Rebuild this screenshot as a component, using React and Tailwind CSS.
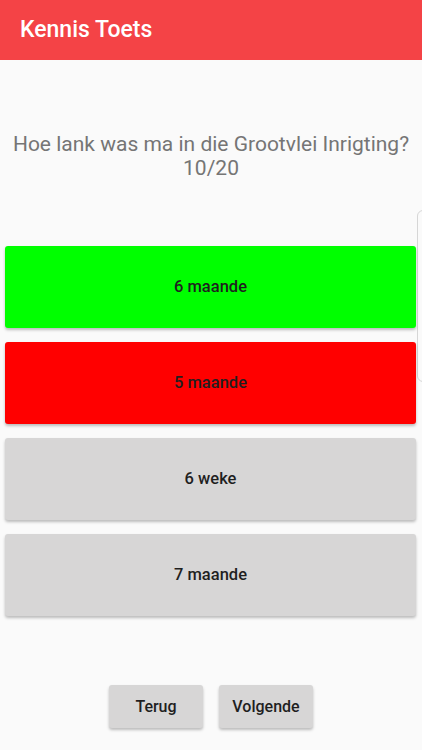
import { useState } from 'react'

const answers = [
  { label: '6 maande', color: 'bg-[#00ff00]' },
  { label: '5 maande', color: 'bg-[#ff0000]' },
  { label: '6 weke', color: 'bg-[#d7d6d6]' },
  { label: '7 maande', color: 'bg-[#d7d6d6]' },
]

function App() {
  const [picked, setPicked] = useState(null)

  return (
    <div
      className="relative h-[750px] w-[422px] overflow-hidden bg-[#fafafa] flex flex-col"
      style={{ fontFamily: 'Roboto, "Noto Sans", sans-serif' }}
    >
      <header className="h-[60px] bg-[#f44346] flex items-center px-5">
        <h1 className="text-[23px] font-medium text-white">Kennis Toets</h1>
      </header>

      {/* faint side card peeking on the right */}
      <div className="absolute left-[417px] top-[210px] h-[172px] w-[20px] rounded-md border border-[#d6d6d6] bg-[#fafafa]" />

      <div className="pt-[72px] text-center text-[21px] leading-[24px] text-[#757575]">
        <p>Hoe lank was ma in die Grootvlei Inrigting?</p>
        <p>10/20</p>
      </div>

      <div className="relative mt-[66px] flex flex-col gap-[14px] pl-[5px] pr-[6px]">
        {answers.map((a, i) => (
          <button
            key={a.label}
            onClick={() => setPicked(i)}
            className={`h-[82px] w-full rounded-[3px] ${a.color} text-[16.5px] font-medium text-[#1f1f1f] shadow-[0_2px_3px_rgba(0,0,0,0.25)]`}
          >
            {a.label}
          </button>
        ))}
      </div>

      <div className="mt-[69px] flex justify-center gap-4">
        <button className="h-[43px] w-[94px] rounded-[3px] bg-[#d7d6d6] text-[16px] font-medium text-[#1f1f1f] shadow-[0_2px_3px_rgba(0,0,0,0.25)]">
          Terug
        </button>
        <button className="h-[43px] w-[94px] rounded-[3px] bg-[#d7d6d6] text-[16px] font-medium text-[#1f1f1f] shadow-[0_2px_3px_rgba(0,0,0,0.25)]">
          Volgende
        </button>
      </div>
    </div>
  )
}

export default App
